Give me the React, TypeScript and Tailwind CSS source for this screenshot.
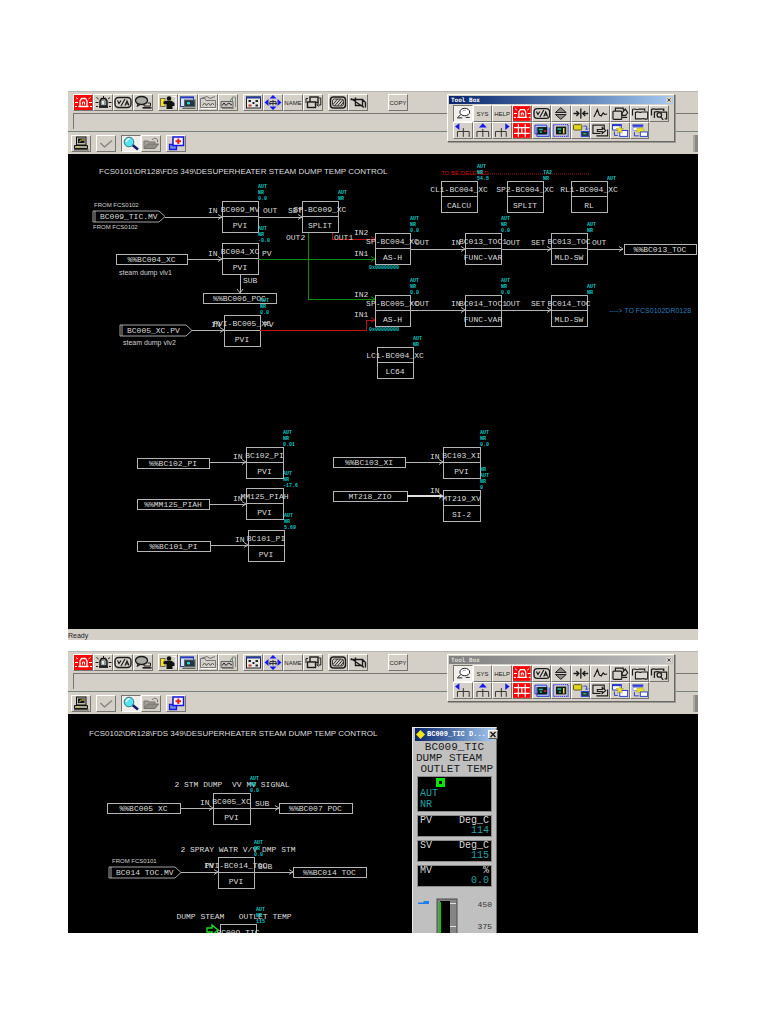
import type { ReactNode } from "react";
import clsx from "clsx";

const MONO = "font-['Liberation_Mono',monospace]";
const SANS = "font-['Liberation_Sans',sans-serif]";

/* ---------- icons ---------- */

const icons: Record<string, ReactNode> = {
  lampRed: (
    <>
      <rect width="18" height="15" fill="#fe0505" />
      <g stroke="#fff" fill="none">
        <path d="M6 11V6l1.500-2.500h4L13 6v5M4.500 11.500h10" strokeWidth="1.300" />
        <path d="M8.500 9.500V7h2v2.500" />
        <path d="M1 7.500h3M15 7.500h3M2 2.500l2 1.500M16.500 2.500l-2 1.500M1 11.500h2M16 11.500h2" />
      </g>
    </>
  ),
  lamp: (
    <g stroke="#1c1c1c" fill="none">
      <path d="M6 11V6l1.500-2.500h4L13 6v5z" fill="#8f9a90" strokeWidth="1.500" />
      <path d="M5 12h9" strokeWidth="1.800" />
      <path d="M1.500 7.500h3M14.500 7.500h3M2.500 2.500l2 1.500M16 2.500l-2 1.500M2 11.500h2M15 11.500h2M9.500 1v2" />
      <path d="M9 6v3.500" stroke="#fff" strokeWidth="1.500" />
    </g>
  ),
  percent: (
    <g stroke="#1c1c1c" fill="none">
      <rect x="1" y="2.500" width="16" height="10" rx="3.500" strokeWidth="1.400" />
      <path d="M7 11l4-7M3.500 5.500l1.500 3 2-3M11 10.500l2-4.500 2 4.500M11.800 9h2.600" strokeWidth="1.200" />
    </g>
  ),
  bubbles: (
    <g stroke="#1c1c1c" fill="none">
      <ellipse cx="7.500" cy="5.500" rx="6" ry="4" fill="#a9a9a4" strokeWidth="1.400" />
      <path d="M10 9.500V11h6.500V8H13.500M4 9L3 11.500l3-1.800" />
      <path d="M8.500 12.800h9" strokeWidth="1.700" />
    </g>
  ),
  operator: (
    <>
      <path d="M1.500 3.500H6v8H1.500z" fill="#f4e12a" stroke="#44423a" strokeWidth="0.700" />
      <circle cx="10" cy="3.500" r="2.300" fill="#111" />
      <path d="M4.500 6.500l3.500-.8h4.500L15.500 8v3h-2v3H7.500V9L4.500 9z" fill="#111" />
      <path d="M13.500 1.500H17v12" stroke="#fff" fill="none" />
    </>
  ),
  graphic: (
    <>
      <rect x="1.500" y="2" width="13" height="9.500" fill="#dbe4f4" stroke="#2b3f93" />
      <path d="M1 2.500h14" stroke="#2539c8" strokeWidth="1.700" />
      <rect x="5.500" y="5" width="10.500" height="6.500" fill="#26343c" stroke="#56686e" />
      <path d="M8 8.200h3" stroke="#30d8d8" strokeWidth="2.200" />
      <path d="M3.500 13.200h13" stroke="#333" />
    </>
  ),
  folderTrend: (
    <g fill="none" stroke="#777">
      <path d="M1.500 12.500V3.500h4.500l1 2h9.500v7zM2 3.500l6-2 3 2 5-2" />
      <path d="M3.500 10.500l2-2.500 2 2.500 2-2.500 2 2.500 2-2.500 1.500 2" stroke="#555" />
      <path d="M2 13.500h15" stroke="#fff" />
    </g>
  ),
  trend: (
    <g fill="none" stroke="#666">
      <path d="M2 6.500h12v6H2z" fill="#c3c1bc" />
      <path d="M3 10.500l2-2.500 2 2.500L9.500 8l3.500 2" stroke="#222" />
      <path d="M13.500 6V2h3v10M3 13.500h12" stroke="#888" />
      <path d="M11 6l2.500-3.500" stroke="#3c9a58" />
    </g>
  ),
  tiles: (
    <>
      <rect x="2.500" y="2" width="14" height="11" fill="#e9e9e9" stroke="#222" />
      <path d="M2 2.500h15" stroke="#223a9a" strokeWidth="2" />
      <path d="M4.500 6H7M11.500 6H14M11.500 10.500H14M8.500 8h2" stroke="#222" strokeWidth="2" />
      <path d="M4.500 10.500h3" stroke="#c43b2b" strokeWidth="2" />
    </>
  ),
  arrows: (
    <>
      <path d="M9 0l3.500 3.500h-7zM9 15l3.500-3.500h-7zM.5 7.500l4-3.500v7zM17.500 7.500l-4-3.500v7z" fill="#1515ff" />
      <path d="M6 10V6.500h6V10M9 5v5.500M5 8.500h8" stroke="#333" fill="none" />
    </>
  ),
  swap: (
    <g fill="none" stroke="#1c1c1c" strokeWidth="1.400">
      <rect x="6" y="2" width="8" height="5.500" />
      <rect x="3.500" y="7" width="8" height="5.500" fill="#d4d0c8" />
      <path d="M4 3.500H2V8M15 3h1.800v7h-3.500M14.500 8L12.800 9.800l1.700 1.800" strokeWidth="1" />
    </g>
  ),
  hatch: (
    <g fill="none" stroke="#1c1c1c">
      <rect x="1.500" y="2" width="15" height="11" rx="3" strokeWidth="1.500" />
      <rect x="3.500" y="4" width="11" height="7" rx="2" strokeWidth="0.800" />
      <path d="M4 9.500L8.500 4M5.500 11l6-7M8.500 11L14 4.500M11.500 11L14.500 7" strokeWidth="0.900" />
    </g>
  ),
  crossed: (
    <g fill="none" stroke="#1c1c1c" strokeWidth="1.400">
      <path d="M4.500 4.500h9v6h-7v-8M1.500 4.500h3M2 3.500l13 9M13.500 4.500l3 3v5" />
    </g>
  ),
  computer: (
    <>
      <rect x="4.500" y="1" width="9.500" height="8" fill="#bcbcae" stroke="#111" />
      <rect x="6" y="2.500" width="6.500" height="4.500" fill="#14141a" />
      <path d="M7.500 5.500l2-1.500H12" stroke="#e8e520" fill="none" />
      <path d="M2.500 9.500h13v3h-13z" fill="#aaa894" stroke="#111" />
      <path d="M2 13.800h14.500" stroke="#111" />
      <path d="M4.500 11h3" stroke="#d8d420" />
    </>
  ),
  check: <path d="M3.500 7l4 4L15 4.500" fill="none" stroke="#8a8880" strokeWidth="1.600" />,
  search: (
    <>
      <path d="M10.500 9l5.500 4.500" stroke="#131b66" strokeWidth="2.400" />
      <circle cx="7" cy="6" r="4.800" fill="#53e6f3" stroke="#3b767f" />
      <path d="M4.500 6c0-2 1-3 3-3" stroke="#fff" fill="none" strokeWidth="1.400" />
    </>
  ),
  openFolder: (
    <>
      <path d="M2 12V5h4l1 1h6v2" fill="#a5a39b" stroke="#74726b" />
      <path d="M2 12.500L5.500 8h11L13 12.500z" fill="#8f8d86" stroke="#74726b" />
      <path d="M10 4c2-2.500 4.500-2 5.500 0V6" fill="none" stroke="#74726b" />
    </>
  ),
  redCross: (
    <>
      <path d="M2.500 8.500h7v5h-7z" fill="#6d8bec" stroke="#1a1ad8" strokeWidth="1.300" />
      <rect x="6" y="1" width="10.500" height="8.500" fill="#fff" stroke="#1414e6" strokeWidth="1.500" />
      <path d="M11.300 2.500v5.500M8.500 5.300H14" stroke="#f01414" strokeWidth="1.900" />
    </>
  ),
  balloon: (
    <g fill="none" stroke="#1c1c1c">
      <ellipse cx="11" cy="6" rx="5" ry="3.800" fill="#fff" />
      <path d="M7 8.500L3.500 12h5M12 11.500h4" />
      <path d="M8.500 5.500c1-1.500 2-1.500 3.500-1" stroke="#999" />
    </g>
  ),
  upDown: (
    <>
      <path d="M9 1.500l5.500 5h-11zM9 13.500l5.500-5h-11z" fill="#8a8a86" stroke="#1c1c1c" />
      <path d="M3.500 7.500h11" stroke="#d4d0c8" />
    </>
  ),
  inward: (
    <g fill="none" stroke="#1c1c1c" strokeWidth="1.400">
      <path d="M9 2.500v10M1.500 7.500H7M11 7.500h5.500M4.500 5L7 7.500 4.500 10M13.500 5L11 7.500l2.500 2.500" />
    </g>
  ),
  wave: <path d="M3 11L5 7l1.500-3.500L8.500 9l2 1 2-3 1.500 1.500 2.500-.5" fill="none" stroke="#1c1c1c" strokeWidth="1.200" />,
  copyOut: (
    <g fill="none" stroke="#1c1c1c" strokeWidth="1.200">
      <rect x="2" y="5" width="9" height="8.500" rx="1" />
      <path d="M4.500 5V2h8v2.500M11 7.500l3.500-4.500 2.500 3.500-2 3h-3.500zM11.500 11.500h5" />
    </g>
  ),
  pages: (
    <g fill="none" stroke="#1c1c1c" strokeWidth="1.100">
      <path d="M1.500 9.500V3.500c2.500-2 4 1 6.500-.5h6v2" />
      <path d="M4.500 13V6.500c3.500-2 4.500 1 6.500-.5h6V13c-2 1-4-1-6 0z" fill="#dcdad4" />
    </g>
  ),
  pagesBusy: (
    <g fill="none" stroke="#1c1c1c" strokeWidth="1.300">
      <path d="M1.500 9.500V3.500c2.500-2 4 1 6.500-.5h6v2" />
      <path d="M4.500 12V6c3-1 4.500 0 6.500 0h6v7h-2" />
      <circle cx="9.500" cy="9" r="2.300" />
      <path d="M11 11l2.500 3" />
    </g>
  ),
  treeLeft: (
    <>
      <path d="M1 3.500L5.500 0v7z" fill="#1717f0" />
      <path d="M3.500 14V8.500h12V14M9.500 5v9" stroke="#333" fill="none" />
    </>
  ),
  treeUp: (
    <>
      <path d="M9 0l4 4.500H5z" fill="#1717f0" />
      <path d="M3 14V8.500h12V14M9 6v8" stroke="#333" fill="none" />
    </>
  ),
  treeRight: (
    <>
      <path d="M17 3.500L12.500 0v7z" fill="#1717f0" />
      <path d="M2.500 14V8.500h11V14M8.500 5v9" stroke="#333" fill="none" />
    </>
  ),
  redGrid: (
    <>
      <rect width="18" height="15" fill="#fe0505" />
      <path d="M5.500 1v13M12.500 1v13M1 4.500h16M1 10.500h16M9 5v5" stroke="#fff" fill="none" strokeWidth="1.200" />
    </>
  ),
  screens: (
    <>
      <path d="M2 2h12v9H2zM4 4v9.500h12.500V4.500" fill="#b7c6f2" stroke="#2a3fd0" />
      <rect x="4.500" y="4" width="10" height="7.500" fill="#11191a" />
      <path d="M6 6.500h4M7 9h2" stroke="#20c69a" strokeWidth="1.600" />
      <path d="M11 8h2.500" stroke="#e24" strokeWidth="1.500" />
    </>
  ),
  screensDotted: (
    <>
      <rect x="1.500" y="1.500" width="15" height="12" fill="none" stroke="#1717f0" strokeDasharray="1 1" strokeWidth="1.500" />
      <rect x="4" y="3.500" width="10.500" height="8" fill="#11191a" />
      <path d="M5.500 6h4M7 9h2" stroke="#20c69a" strokeWidth="1.600" />
      <path d="M12 5v5.500" stroke="#eee023" strokeWidth="1.500" />
    </>
  ),
  database: (
    <>
      <rect x="1.500" y="1.500" width="8.500" height="5.500" rx="1" fill="#e0d51d" stroke="#5e5a16" />
      <path d="M11.500 3h3.500v3.500M13.500 5.500L15 7l1.500-1.500" stroke="#2a3fd0" fill="none" />
      <rect x="9.500" y="8.500" width="7.500" height="5" fill="#25363a" stroke="#2a3fd0" />
      <path d="M11.500 10.800h3" stroke="#20c69a" strokeWidth="1.300" />
    </>
  ),
  exportWin: (
    <g fill="none" stroke="#1c1c1c" strokeWidth="1.200">
      <rect x="2" y="2" width="11.500" height="8.500" />
      <path d="M5.500 13H17V6.500M6.500 6.500h5V4.500L15 7.500 11.500 10.500V8.500H6.500z" fill="#d4d0c8" />
    </g>
  ),
  starWin: (
    <>
      <path d="M1.500 2h9v5h-9z" fill="#fff" stroke="#2a3fd0" />
      <path d="M1 2h10" stroke="#2a3fd0" strokeWidth="2.200" />
      <rect x="9" y="7.500" width="8" height="6" fill="#fff" stroke="#2a3fd0" />
      <path d="M9 3l1.200 2.500H13l-2.300 1.900.9 3L9 8.700l-2.600 1.700.9-3L5 5.500h2.800z" fill="#efe220" stroke="#a89c1a" strokeWidth="0.500" />
      <path d="M3.500 8.500v4H7" stroke="#2a3fd0" fill="none" />
    </>
  ),
  arrowWin: (
    <>
      <path d="M1.500 2.500h11" stroke="#2a3fd0" strokeWidth="2.400" />
      <path d="M2 4.500h10v3H2z" fill="#fff" stroke="#8aa0e8" />
      <path d="M6 5.500l5.500-1 2 3-3 4L8.500 9 6 9.500z" fill="#efe220" stroke="#a89c1a" strokeWidth="0.500" />
      <rect x="9.500" y="9" width="7.500" height="4.500" fill="#fff" stroke="#2a3fd0" />
      <path d="M3.500 9v4H8" stroke="#2a3fd0" fill="none" />
    </>
  ),
};

type ToolProps = { icon?: string; text?: string; label: string; pressed?: boolean; fluid?: boolean };

function Tool({ icon, text, label, pressed, fluid }: ToolProps) {
  return (
    <button
      type="button"
      aria-label={label}
      className={clsx(
        "h-[17px] border flex items-center justify-center overflow-hidden",
        fluid ? "w-full" : "w-5 shrink-0",
        pressed
          ? "bg-[#f0efec] border-t-[#77756f] border-l-[#77756f] border-r-white border-b-white"
          : "bg-[#d4d0c8] border-t-white border-l-white border-r-[#77756f] border-b-[#77756f]"
      )}
    >
      {icon ? (
        <svg viewBox="0 0 18 15" className="w-full h-full">
          {icons[icon]}
        </svg>
      ) : (
        <span className={clsx(SANS, "text-[6px] leading-none text-[#222]")}>{text}</span>
      )}
    </button>
  );
}

/* ---------- window chrome ---------- */

const mainTools: ToolProps[][] = [
  [
    { icon: "lampRed", label: "Process alarm" },
    { icon: "lamp", label: "System alarm" },
    { icon: "percent", label: "Operator guide" },
    { icon: "bubbles", label: "Messages" },
  ],
  [
    { icon: "operator", label: "User in" },
    { icon: "graphic", label: "Graphic" },
    { icon: "folderTrend", label: "Trend folder" },
    { icon: "trend", label: "Trend" },
  ],
  [
    { icon: "tiles", label: "Overview" },
    { icon: "arrows", label: "Navigate" },
    { text: "NAME", label: "Name" },
    { icon: "swap", label: "Exchange" },
  ],
  [
    { icon: "hatch", label: "Clear screen" },
    { icon: "crossed", label: "Buzzer off" },
  ],
];

const boxTools: ToolProps[] = [
  { icon: "balloon", label: "Guide", pressed: true },
  { text: "SYS", label: "System" },
  { text: "HELP", label: "Help" },
  { icon: "lampRed", label: "Alarm" },
  { icon: "percent", label: "Operator guide" },
  { icon: "upDown", label: "Faceplate" },
  { icon: "inward", label: "Tuning" },
  { icon: "wave", label: "Trend" },
  { icon: "copyOut", label: "Process report" },
  { icon: "pages", label: "Historical report" },
  { icon: "pagesBusy", label: "Message search" },
  { icon: "treeLeft", label: "Previous" },
  { icon: "treeUp", label: "Up" },
  { icon: "treeRight", label: "Next" },
  { icon: "redGrid", label: "Annunciator" },
  { icon: "screens", label: "Window set" },
  { icon: "screensDotted", label: "Dynamic windows" },
  { icon: "database", label: "Data" },
  { icon: "exportWin", label: "Cycle window" },
  { icon: "starWin", label: "Preset one" },
  { icon: "arrowWin", label: "Preset two" },
];

function ToolBox({ active }: { active: boolean }) {
  return (
    <div className="absolute left-[379px] top-[2px] w-[228px] p-px pb-[2px] bg-[#d4d0c8] border border-t-white border-l-white border-r-[#6a6862] border-b-[#6a6862] shadow-[1px_1px_0_#9a9892]">
      <div
        className={clsx(
          "h-2 flex items-center justify-between pl-[2px] pr-px mb-px bg-linear-to-r",
          active ? "from-[#0a246a] to-[#a6caf0] text-white" : "from-[#808080] to-[#c0c0c0] text-[#dedbd4]"
        )}
      >
        <span className="font-['DejaVu_Sans_Mono',monospace] font-bold text-[6px] leading-none">Tool Box</span>
        <button type="button" aria-label="Close tool box" className="w-[6px] h-[6px] bg-[#d4d0c8] flex items-center">
          <svg viewBox="0 0 6 6" className="w-full h-full">
            <path d="M1.500 1.500l3 3M4.500 1.500l-3 3" stroke="#222" strokeWidth="0.800" />
          </svg>
        </button>
      </div>
      <div className="grid grid-cols-11 px-1">
        {boxTools.map((t) => (
          <Tool key={t.label} {...t} fluid />
        ))}
      </div>
    </div>
  );
}

function Chrome({ active }: { active: boolean }) {
  return (
    <header className="relative bg-[#d4d0c8] border-t border-[#b8b6b0]">
      <div className="flex gap-[5px] pl-[5px] pt-[2px]">
        {mainTools.map((group, i) => (
          <div key={i} className="flex">
            {group.map((t) => (
              <Tool key={t.label} {...t} />
            ))}
          </div>
        ))}
        <div className="ml-[15px]">
          <Tool text="COPY" label="Copy" />
        </div>
      </div>
      <div className="pl-[5px] pt-[2px] pb-[2px]">
        <input
          type="text"
          readOnly
          aria-label="Message"
          className="block w-full h-4 bg-[#d4d0c8] border-t border-l border-[#77756f] outline-none"
        />
      </div>
      <div className="flex items-end gap-[5px] pl-[3px] pt-[3px] pb-[2px] border-t border-[#77857f]">
        <Tool icon="computer" label="Station" />
        <Tool icon="check" label="Acknowledge" />
        <div className="flex">
          <Tool icon="search" label="Search" pressed />
          <Tool icon="openFolder" label="Open" />
        </div>
        <Tool icon="redCross" label="Add window" />
        <div className="ml-auto w-[5px] h-[17px] bg-[#8b8984] border-l-2 border-[#aaa8a2]" />
      </div>
      <ToolBox active={active} />
    </header>
  );
}

/* ---------- drawing parts ---------- */

const INK = "#b4b4b4";
const GREEN = "#0a8f0a";
const RED = "#c01010";

type LabelProps = { x: number; y: number; children: string; mid?: boolean; fill?: string };

function Label({ x, y, children, mid, fill = "#dadada" }: LabelProps) {
  return (
    <text
      x={x}
      y={y}
      fill={fill}
      textAnchor={mid ? "middle" : "start"}
      className={clsx(MONO, "text-[8px] whitespace-pre")}
    >
      {children}
    </text>
  );
}

function Note({ x, y, children, fill = "#d0d0d0" }: LabelProps) {
  return (
    <text x={x} y={y} fill={fill} className={clsx(SANS, "text-[6px]")}>
      {children}
    </text>
  );
}

function Remark({ x, y, children, fill = "#d0d0d0" }: LabelProps) {
  return (
    <text x={x} y={y} fill={fill} className={clsx(SANS, "text-[7px]")}>
      {children}
    </text>
  );
}

function Heading({ x, y, children }: LabelProps) {
  return (
    <text x={x} y={y} fill="#dedede" className={clsx(SANS, "text-[8px]")}>
      {children}
    </text>
  );
}

// Status lines grow upwards from y
function Status({ x, y, lines }: { x: number; y: number; lines: string[] }) {
  return (
    <>
      {lines.map((l, i) => (
        <text
          key={i}
          x={x}
          y={y - (lines.length - 1 - i) * 6}
          fill="#10c4c4"
          className={clsx(MONO, "text-[5px] font-bold")}
        >
          {l}
        </text>
      ))}
    </>
  );
}

type BlockProps = { x: number; y: number; w?: number; name: string; kind: string; status?: string[] };

function Block({ x, y, w = 36, name, kind, status = [] }: BlockProps) {
  return (
    <g>
      <path
        d={`M${x} ${y}h${w}v31h${-w}zM${x} ${y + 15}h${w}`}
        fill="none"
        stroke={INK}
        shapeRendering="crispEdges"
      />
      <Label x={x + w / 2} y={y + 11} mid>
        {name}
      </Label>
      <Label x={x + w / 2} y={y + 27} mid>
        {kind}
      </Label>
      <Status x={x + w} y={y - 1} lines={status} />
    </g>
  );
}

function Tag({ x, y, w = 73, children }: { x: number; y: number; w?: number; children: string }) {
  return (
    <g>
      <rect x={x} y={y} width={w} height="10" fill="none" stroke={INK} shapeRendering="crispEdges" />
      <Label x={x + w / 2} y={y + 8} mid>
        {children}
      </Label>
    </g>
  );
}

function FlagTag({ x, y, children }: { x: number; y: number; children: string }) {
  return (
    <g>
      <path d={`M${x} ${y}h66l6 5.500l-6 5.500h-66zM${x + 2} ${y}v11`} fill="none" stroke={INK} strokeWidth="0.900" />
      <Label x={x + 7} y={y + 8}>
        {children}
      </Label>
    </g>
  );
}

function Wire({ d, color = INK }: { d: string; color?: string }) {
  return <path d={d} fill="none" stroke={color} shapeRendering="crispEdges" />;
}

// Arrow head with its tip at x, y, pointing right
function Tip({ x, y, color = INK }: { x: number; y: number; color?: string }) {
  return <path d={`M${x - 4} ${y - 2.5}L${x} ${y}L${x - 4} ${y + 2.5}`} fill="none" stroke={color} />;
}

function Link({ x1, x2, y, color = INK }: { x1: number; x2: number; y: number; color?: string }) {
  return (
    <>
      <Wire d={`M${x1} ${y}H${x2}`} color={color} />
      <Tip x={x2} y={y} color={color} />
    </>
  );
}

const AUT3 = ["AUT", "NR", "0.0"];
const AUT2 = ["AUT", "NR"];

function DrawingOne() {
  return (
    <svg viewBox="68 154 630 475" preserveAspectRatio="xMinYMin meet" className="block w-full h-[475px] bg-black">
      <Heading x={99} y={174}>
        {"FCS0101\\DR128\\FDS 349\\DESUPERHEATER STEAM DUMP TEMP CONTROL"}
      </Heading>

      <Note x={94} y={207}>FROM FCS0102</Note>
      <FlagTag x={93} y={211}>BC009_TIC.MV</FlagTag>
      <Note x={93} y={229}>FROM FCS0102</Note>
      <Link x1={165} x2={222} y={217} />
      <Label x={208} y={213}>IN</Label>
      <Block x={222} y={201} name="BC009_MV" kind="PVI" status={AUT3} />
      <Label x={263} y={213}>OUT</Label>
      <Link x1={258} x2={302} y={217} />
      <Label x={288} y={213}>SET</Label>
      <Block x={302} y={201} name="SP-BC009_XC" kind="SPLIT" status={AUT2} />

      <Tag x={116} y={254} w={71}>%%BC004_XC</Tag>
      <Remark x={119} y={275}>steam dump vlv1</Remark>
      <Link x1={187} x2={222} y={259} />
      <Label x={208} y={256}>IN</Label>
      <Block x={222} y={243} name="BC004_XC" kind="PVI" status={["AUT", "NR", "-0.0"]} />
      <Label x={262} y={256}>PV</Label>
      <Link x1={258} x2={375} y={259} color={GREEN} />
      <Wire d="M240 274V293" />
      <path d="M237 289L240 293L243 289" fill="none" stroke={INK} />
      <Label x={243} y={283}>SUB</Label>
      <Tag x={203} y={293}>%%BC006_POC</Tag>

      <FlagTag x={120} y={325}>BC005_XC.PV</FlagTag>
      <Remark x={123} y={345}>steam dump vlv2</Remark>
      <Link x1={192} x2={224} y={330} />
      <Label x={211} y={327}>IN</Label>
      <Block x={224} y={315} name="PVI-BC005_XC" kind="PVI" status={AUT3} />
      <Label x={264} y={327}>PV</Label>
      <Wire d="M260 330H366V320H375" color={RED} />
      <Tip x={375} y={320} color={RED} />

      <Wire d="M332 233V239H375" color={RED} />
      <Tip x={375} y={239} color={RED} />
      <Wire d="M308 233V299H375" color={GREEN} />
      <Tip x={375} y={299} color={GREEN} />
      <Label x={286} y={240}>OUT2</Label>
      <Label x={334} y={240}>OUT1</Label>
      <Label x={354} y={235}>IN2</Label>
      <Label x={354} y={256}>IN1</Label>
      <Label x={354} y={297}>IN2</Label>
      <Label x={354} y={317}>IN1</Label>

      <Block x={375} y={233} w={35} name="SP-BC004_XC" kind="AS-H" status={AUT3} />
      <Status x={369} y={269} lines={["0x00000000"]} />
      <Label x={415} y={245}>OUT</Label>
      <Link x1={410} x2={465} y={249} />
      <Label x={451} y={245}>IN</Label>
      <Block x={465} y={233} name="BC013_TOC1" kind="FUNC-VAR" status={AUT3} />
      <Label x={506} y={245}>OUT</Label>
      <Link x1={501} x2={551} y={249} />
      <Label x={531} y={245}>SET</Label>
      <Block x={551} y={233} name="BC013_TOC" kind="MLD-SW" status={AUT2} />
      <Label x={592} y={245}>OUT</Label>
      <Link x1={587} x2={623} y={249} />
      <Tag x={624} y={244} w={72}>%%BC013_TOC</Tag>

      <Block x={375} y={295} w={35} name="SP-BC005_XC" kind="AS-H" status={AUT3} />
      <Status x={369} y={331} lines={["0x00000000"]} />
      <Label x={415} y={306}>OUT</Label>
      <Link x1={410} x2={465} y={310} />
      <Label x={451} y={306}>IN</Label>
      <Block x={465} y={295} name="BC014_TOC1" kind="FUNC-VAR" status={AUT3} />
      <Label x={506} y={306}>OUT</Label>
      <Link x1={501} x2={551} y={310} />
      <Label x={531} y={306}>SET</Label>
      <Block x={551} y={295} name="BC014_TOC" kind="MLD-SW" status={AUT2} />
      <Remark x={609} y={313} fill="#2c7cba">{"----> TO FCS0102DR0128"}</Remark>

      <Note x={441} y={175} fill="#d01010">TO BE DELETED</Note>
      <path d="M488 174H589" stroke="#a01010" strokeDasharray="1 1" />
      <Block x={441} y={181} name="CL1-BC004_XC" kind="CALCU" status={["AUT", "NR", "54.5"]} />
      <Block x={507} y={181} name="SP2-BC004_XC" kind="SPLIT" status={["TA2", "NR"]} />
      <Block x={571} y={181} name="RL1-BC004_XC" kind="RL" status={["AUT"]} />
      <Block x={377} y={347} name="LC1-BC004_XC" kind="LC64" status={AUT2} />

      <Tag x={137} y={458} w={72}>%%BC102_PI</Tag>
      <Link x1={209} x2={246} y={462} />
      <Label x={233} y={459}>IN</Label>
      <Block x={246} y={447} w={37} name="BC102_PI" kind="PVI" status={["AUT", "NR", "0.01"]} />
      <Tag x={137} y={499} w={72}>%%MM125_PIAH</Tag>
      <Link x1={209} x2={246} y={504} />
      <Label x={233} y={501}>IN</Label>
      <Block x={246} y={488} w={37} name="MM125_PIAH" kind="PVI" status={["AUT", "NR", "-17.6"]} />
      <Tag x={137} y={541}>%%BC101_PI</Tag>
      <Link x1={210} x2={248} y={545} />
      <Label x={235} y={542}>IN</Label>
      <Block x={248} y={530} name="BC101_PI" kind="PVI" status={["AUT", "NR", "5.69"]} />

      <Tag x={333} y={457} w={72}>%%BC103_XI</Tag>
      <Link x1={405} x2={443} y={462} />
      <Label x={430} y={459}>IN</Label>
      <Block x={443} y={447} w={37} name="BC103_XI" kind="PVI" status={["AUT", "NR", "0.0"]} />
      <Tag x={333} y={491} w={74}>MT218_ZIO</Tag>
      <path d="M407 496H443" stroke="#e0e0e0" strokeWidth="2" />
      <Tip x={443} y={496} />
      <Label x={430} y={493}>IN</Label>
      <Block x={443} y={490} w={37} name="MT219_XV" kind="SI-2" status={["NR", "AUT", "NR", "0"]} />
    </svg>
  );
}

function DrawingTwo() {
  return (
    <svg viewBox="68 714 630 219" preserveAspectRatio="xMinYMin meet" className="block w-full h-[219px] bg-black">
      <Heading x={89} y={736}>
        {"FCS0102\\DR128\\FDS 349\\DESUPERHEATER STEAM DUMP TEMP CONTROL"}
      </Heading>

      <Label x={232} y={787} mid>{"2 STM DUMP  VV MV SIGNAL"}</Label>
      <Tag x={107} y={803}>%%BC005 XC</Tag>
      <Link x1={180} x2={213} y={808} />
      <Label x={200} y={805}>IN</Label>
      <Block x={213} y={793} w={37} name="BC005_XC" kind="PVI" status={AUT3} />
      <Label x={255} y={806}>SUB</Label>
      <Link x1={250} x2={279} y={808} />
      <Tag x={279} y={803}>%%BC007 POC</Tag>

      <Label x={238} y={852} mid>{"2 SPRAY WATR V/V DMP STM"}</Label>
      <Note x={112} y={863}>FROM FCS0101</Note>
      <FlagTag x={109} y={867}>BC014 TOC.MV</FlagTag>
      <Link x1={181} x2={218} y={872} />
      <Label x={204} y={868}>IN</Label>
      <Block x={218} y={857} name="PVI-BC014_TOC" kind="PVI" status={AUT3} />
      <Label x={258} y={869}>SUB</Label>
      <Link x1={254} x2={293} y={872} />
      <Tag x={293} y={867}>%%BC014 TOC</Tag>

      <Label x={234} y={919} mid>{"DUMP STEAM   OUTLET TEMP"}</Label>
      <Block x={220} y={924} name="BC009_TIC" kind="PID" status={["AUT", "NR", "115"]} />
      <path d="M207 928h5v-3l6 5l-6 5v-3h-5z" fill="none" stroke="#17e617" strokeWidth="1.300" />
    </svg>
  );
}

/* ---------- faceplate ---------- */

function Reading({ name, unit, value }: { name: string; unit: string; value: string }) {
  return (
    <div className="bg-black border border-[#8c8c8c] px-[2px] text-[10px] leading-[10px] text-[#d8d8d8]">
      <div className="flex justify-between">
        <span>{name}</span>
        <span>{unit}</span>
      </div>
      <div className="text-right text-[#22a0a0]">{value}</div>
    </div>
  );
}

function Faceplate() {
  return (
    <section
      className={clsx(
        MONO,
        "absolute left-[344px] top-[13px] w-[85px] h-[220px] bg-[#c0c0c0] border border-t-[#e8e8e8] border-l-[#e8e8e8] border-r-[#707070] border-b-[#707070] px-[2px]"
      )}
    >
      <div className="flex items-center h-[13px] px-px gap-[2px] bg-linear-to-r from-[#0a246a] to-[#a6caf0] text-white">
        <svg viewBox="0 0 9 9" className="w-[9px] h-[9px] shrink-0">
          <path d="M4.500 0L9 4.500L4.500 9L0 4.500z" fill="#f5e516" />
        </svg>
        <h2 className="font-bold text-[7px] leading-none whitespace-nowrap">BC009_TIC D...</h2>
        <button
          type="button"
          aria-label="Close faceplate"
          className="ml-auto w-[10px] h-[9px] shrink-0 bg-[#d4d0c8] border border-t-white border-l-white border-[#555]"
        >
          <svg viewBox="0 0 8 7" className="block w-full h-full">
            <path d="M1.500 1l5 5M6.500 1l-5 5" stroke="#111" strokeWidth="1.200" />
          </svg>
        </button>
      </div>
      <div className="text-[11px] leading-[11px] text-[#1a1a1a] pt-px px-px h-[35px] whitespace-nowrap">
        <div className="text-center">BC009_TIC</div>
        <div>DUMP STEAM</div>
        <div className="text-right">OUTLET TEMP</div>
      </div>
      <div className="flex flex-col gap-[3px] px-[2px]">
        <div className="h-[36px] bg-black border border-[#8c8c8c] px-[2px] text-[10px] leading-[11px] text-[#22a0a0]">
          <div className="pl-4 pt-px pb-px">
            <div className="w-[9px] h-[9px] bg-[#05e605] p-[3px]">
              <div className="h-full bg-black" />
            </div>
          </div>
          <div>AUT</div>
          <div>NR</div>
        </div>
        <Reading name="PV" unit="Deg_C" value="114" />
        <Reading name="SV" unit="Deg_C" value="115" />
        <Reading name="MV" unit="%" value="0.0" />
      </div>
      <svg viewBox="0 0 79 60" className="block w-[79px] h-[60px] mt-[11px]">
        <path d="M3 4.500h5l1-1.500h5v3H9L8 6H3z" fill="#1c7ff0" />
        <rect x="22" y="1" width="20" height="70" fill="#858585" stroke="#4a4a4a" />
        <rect x="25" y="3" width="10" height="68" fill="#000" />
        <path d="M25 4v60" stroke="#0ac80a" strokeWidth="2" />
        <path d="M35 5.500h6M35 28.500h6" stroke="#ddd" />
        <text x="77" y="9" textAnchor="end" fill="#333" className="text-[8px]">450</text>
        <text x="77" y="31" textAnchor="end" fill="#333" className="text-[8px]">375</text>
      </svg>
    </section>
  );
}

export default function App() {
  return (
    <main className="min-h-screen bg-white pl-[68px] pr-[70px] pt-[91px] pb-[91px] flex flex-col gap-[11px]">
      <section className="overflow-hidden">
        <Chrome active />
        <DrawingOne />
        <footer className={clsx(SANS, "h-[11px] bg-[#d4d0c8] text-[7px] leading-[13px] text-[#222]")}>Ready</footer>
      </section>
      <section className="overflow-hidden">
        <Chrome active={false} />
        <div className="relative overflow-hidden">
          <DrawingTwo />
          <Faceplate />
        </div>
      </section>
    </main>
  );
}
